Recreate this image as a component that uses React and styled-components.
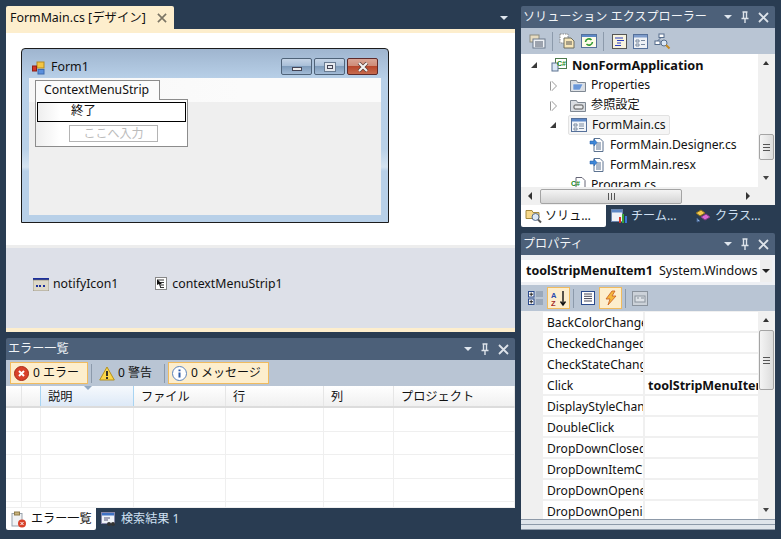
import React from "react";
import styled, { createGlobalStyle } from "styled-components";

const Global = createGlobalStyle`
  html, body { margin: 0; padding: 0; background: #293c52; }
  * { box-sizing: border-box; }
  #root { width: 781px; height: 539px; overflow: hidden; }
`;

const Page = styled.div`
  width: 781px; height: 539px; background: #293c52; padding: 6px 6px 9px;
  display: flex; gap: 6px; color: #111;
  font: 12.2px/16px "Noto Sans", "Noto Sans CJK JP", sans-serif;
`;
const LeftCol = styled.div`width: 509px; display: flex; flex-direction: column; gap: 6px;`;
const RightCol = styled.div`width: 254px; display: flex; flex-direction: column; gap: 6px;`;

/* document well */
const Editor = styled.section`height: 326px; display: flex; flex-direction: column;`;
const TabRow = styled.div`height: 23px; display: flex; justify-content: space-between;`;
const DocTab = styled.div`
  width: 168px; background: #fdeecd; border-radius: 2px 2px 0 0; display: flex; align-items: center;
  justify-content: space-between; padding: 0 7px 0 4px; font-size: 12.4px; white-space: nowrap;
`;
const WellMenu = styled.div`padding: 10px 7px 0 0;`;
const Caret = styled.div`
  width: 0; height: 0; border-left: 4px solid transparent; border-right: 4px solid transparent;
  border-top: 4px solid ${p => p.$c || "#dfe6ee"};
`;
const YellowBar = styled.div`height: ${p => p.$h}px; background: #fdeecd; flex: none;`;
const Designer = styled.div`flex: 1; background: #fff; padding: 15px 0 0 15px; min-height: 0;`;
const GreyLine = styled.div`height: 3px; background: #ededed;`;
const Tray = styled.div`height: 80px; background: #dde0e8; padding: 27px 0 0 27px; display: flex; gap: 37px;`;
const TrayItem = styled.div`display: flex; align-items: center; gap: ${p => p.$gap}px; height: 17px; white-space: nowrap; font-size: 12.3px;`;

/* form */
const FormWindow = styled.div`
  position: relative; width: 368px; height: 175px; border: 1px solid #1c1c1c; border-radius: 4px 4px 0 0;
  background: linear-gradient(#9fb5cf 0, #b8d0e8 30px, #b9d1e8 100px, #d5e3f0 118px, #b8d0e8 122px);
  padding: 0 7px 7px; display: flex; flex-direction: column;
`;
const FormTitle = styled.div`height: 29px; display: flex; align-items: flex-end; padding: 0 3px 3px 3px;`;
const FormName = styled.span`margin-left: 6px; flex: 1; font-size: 12.4px; line-height: 17px; height: 17px;`;
const WinBtns = styled.div`display: flex; gap: 2px;`;
const WinBtn = styled.div`
  width: 31px; height: 17px; border: 1px solid ${p => p.$close ? "#5e2a2a" : "#4f6379"}; border-radius: 2px;
  display: flex; align-items: center; justify-content: center;
  background: ${p => p.$close
    ? "linear-gradient(#d9a596 0, #cf8c78 45%, #b8472c 50%, #c66b4e 100%)"
    : "linear-gradient(#c5d4e6 0, #a9bfd8 45%, #7f9cbb 50%, #a3bbd6 100%)"};
`;
const MinGlyph = styled.div`width: 10px; height: 4px; background: #ececec; border: 1px solid #445; margin-top: 4px;`;
const MaxGlyph = styled.div`width: 10px; height: 8px; background: #e4e8ee; border: 2px solid #e4e8ee; box-shadow: inset 0 0 0 1px #445; outline: 1px solid #6a7c92;`;
const Client = styled.div`flex: 1; background: #efefef; display: flex; flex-direction: column;`;
const MenuBand = styled.div`height: 24px; background: linear-gradient(90deg,#f7f7f7,#fbfbfb 60%,#fbfbfb);`;
const MenuOverlay = styled.div`position: absolute; left: 13px; top: 31px; width: 153px;`;
const MenuTab = styled.div`
  position: relative; width: 125px; height: 20px; border: 1px solid #8c8c8c; border-bottom: 0; background: #fbfbfb;
  padding: 1px 0 0 8px; font-size: 12.3px; z-index: 1; white-space: nowrap;
`;
const MenuBox = styled.div`
  height: 48px; margin-top: -1px; border: 1px solid #8c8c8c; background: #fdfdfd; padding: 2px 1px 0; position: relative;
`;
const SelectedItem = styled.div`
  height: 20px; border: 1px solid #000; padding: 0 0 0 33px; line-height: 16px;
  background: linear-gradient(90deg,#eee,#fff 22px,#fff 22px);
  font-size: 12.5px;
`;
const TypeRow = styled.div`
  height: 24px; padding: 3px 0 0 33px;
  background: linear-gradient(90deg,#eee,#fff 24px,#fff 24px);
  margin: 0 -1px;
`;
const TypeHere = styled.div`
  width: 89px; height: 17px; border: 1px solid #b4b4b4; background: #fff; color: #bcbcbc;
  text-align: center; line-height: 15px; font-size: 12px;
`;

/* tool windows */
const Pane = styled.section`display: flex; flex-direction: column; height: ${p => p.$h}px; flex: none;`;
const PaneHead = styled.header`
  height: 22px; flex: none; background: #4c6079; color: #f1f4f7; border-radius: 2px 2px 0 0;
  display: flex; align-items: center; justify-content: space-between; padding: 0 6px 0 2px; font-size: 12.1px;
  white-space: nowrap;
`;
const HeadBtns = styled.div`display: flex; align-items: center; gap: 8px; color: #dde3ea;`;
const Bar = styled.div`
  height: 26px; flex: none; background: #b9c5d4; display: flex; align-items: center; padding: 0 ${p => p.$px}px; gap: ${p => p.$gap}px;
`;
const Sep = styled.div`width: 1px; height: 19px; background: #8c9aab; margin-right: ${p => p.$mr ?? 0}px;`;
const ToolBtn = styled.div`
  display: flex; align-items: center; justify-content: ${p => p.$center ? "center" : "flex-start"}; gap: ${p => p.$gap ?? 4}px; height: 22px; width: ${p => p.$w}px;
  padding: 0 ${p => p.$center ? 0 : 3}px; white-space: nowrap; font-size: 12px;
  border: 1px solid ${p => p.$on ? "#f0bb5f" : "transparent"};
  background: ${p => p.$on ? "#fdeecd" : "transparent"};
`;

/* error table */
const Table = styled.div`flex: 1; background: #fff; display: flex; flex-direction: column; min-height: 0;`;
const HeadRow = styled.div`
  display: grid; grid-template-columns: 16px 19px 93px 92px 98px 70px 1fr; height: 22px; flex: none;
  border-bottom: 2px solid #dcdcdc;
  background: linear-gradient(#fff, #f0f0f0);
`;
const HeadCell = styled.div`
  position: relative; padding: 3px 0 0 7px; font-size: 12.2px; border-right: 1px solid #e6e6e6;
  ${p => p.$active && `
    background: linear-gradient(#f6f9fd, #dde9f7);
    border-left: 1px solid #a8d4f2; border-right: 1px solid #a8d4f2; margin-left: -1px;
  `}
`;
const SortMark = styled.div`
  position: absolute; left: 43px; top: 0; width: 0; height: 0;
  border-left: 4px solid transparent; border-right: 4px solid transparent; border-top: 4px solid #93a9c2;
`;
const BodyRow = styled.div`
  display: grid; grid-template-columns: 16px 19px 93px 92px 98px 70px 1fr; height: ${p => p.$h}px; flex: none;
  border-bottom: 1px solid #efefef;
`;
const BodyCell = styled.div`border-right: 1px solid #efefef;`;

const BottomTabs = styled.div`height: 22px; flex: none; display: flex; align-items: flex-start;`;
const BottomTab = styled.div`
  height: 22px; width: ${p => p.$w}px; display: flex; align-items: center; gap: ${p => p.$gap ?? 3}px; padding-left: ${p => p.$pl ?? 4}px; white-space: nowrap; font-size: 12.1px;
  color: ${p => p.$on ? "#111" : "#cfe0f3"}; background: ${p => p.$on ? "#fff" : "transparent"};
  border-radius: 0 0 2px 2px;
`;

/* solution explorer */
const Scrolled = styled.div`flex: 1; display: flex; min-height: 0; background: #fff;`;
const TreeClip = styled.div`flex: 1; overflow: hidden; min-width: 0; padding-top: 1px;`;
const TreeRow = styled.div`
  height: ${p => p.$b ? 19 : 20}px; margin-bottom: ${p => p.$b ? 1 : 0}px; display: flex; align-items: center; padding-left: ${p => p.$x}px; position: relative; white-space: nowrap;
  font-weight: ${p => p.$b ? 700 : 400}; font-size: ${p => p.$b ? 12.7 : 12.2}px;
`;
const Expander = styled.div`
  position: absolute; left: ${p => p.$x}px; top: 6px; width: 0; height: 0;
  ${p => p.$open
    ? `border-left: 6px solid transparent; border-bottom: 6px solid #3a3a3a; margin-top:1px;`
    : `border-left: 5px solid #fff; border-top: 5px solid transparent; border-bottom: 5px solid transparent; filter: drop-shadow(1px 0 0 #999) drop-shadow(-1px 0 0 #999);`}
`;
const Sel = styled.span`
  display: flex; align-items: center; height: 20px; padding: 0 3px 0 2px; margin-left: -2px;
  border: 1px solid #e2e2e2; border-radius: 2px; background: #f5f5f5;
`;
const RowLabel = styled.span`margin-left: 5px;`;
const VScroll = styled.div`
  width: 17px; flex: none; background: #f0f0f0; display: flex; flex-direction: column; align-items: center; position: relative;
  padding: ${p => p.$pt}px 0 0;
`;
const Thumb = styled.div`
  width: 15px; height: ${p => p.$h}px; border: 1px solid #a4a4a4; border-radius: 2px;
  background: linear-gradient(90deg,#f4f4f4,#dcdcdc); display: flex; align-items: center; justify-content: center;
`;
const Grip = styled.div`width: 7px; height: 7px; background: repeating-linear-gradient(#555 0 1px, transparent 1px 3px);`;
const HGrip = styled.div`width: 7px; height: 7px; background: repeating-linear-gradient(90deg,#555 0 1px, transparent 1px 3px);`;
const ArrowUp = styled.div`
  position: absolute; top: 7px; left: 5px; width: 0; height: 0; border-left: 3.5px solid transparent; border-right: 3.5px solid transparent; border-bottom: 4px solid #333;
`;
const ArrowDown = styled.div`
  position: absolute; bottom: 7px; left: 5px; width: 0; height: 0; border-left: 3.5px solid transparent; border-right: 3.5px solid transparent; border-top: 4px solid #444;
`;
const HScroll = styled.div`
  height: 18px; flex: none; display: flex; background: #f0f0f0; align-items: center; padding-left: 19px; position: relative;
`;
const HThumb = styled.div`
  width: 142px; height: 15px; border: 1px solid #a4a4a4; border-radius: 2px; background: linear-gradient(#f4f4f4,#d4d4d4);
  display: flex; align-items: center; justify-content: center;
`;
const ArrowLeft = styled.div`position: absolute; left: 7px; top: 5px; width: 0; height: 0; border-top: 4px solid transparent; border-bottom: 4px solid transparent; border-right: 4px solid #333;`;
const ArrowRight = styled.div`position: absolute; right: 25px; top: 5px; width: 0; height: 0; border-top: 4px solid transparent; border-bottom: 4px solid transparent; border-left: 4px solid #333;`;
const Corner = styled.div`width: 17px; height: 18px; background: #f0f0f0; position: absolute; right: 0; top: 0;`;

/* properties */
const Combo = styled.div`
  height: 30px; flex: none; background: #eef0f4; padding: 5px 3px 3px 0; display: flex;
`;
const ComboField = styled.div`
  flex: 1; background: #fff; display: flex; align-items: center; padding-left: 5px; overflow: hidden; white-space: nowrap; font-size: 12.5px;
`;
const ComboName = styled.b`margin-right: 6px;`;
const ComboBtn = styled.div`width: 12px; background: #eee; display: flex; align-items: center; justify-content: center;`;
const GridWrap = styled.div`flex: 1; display: flex; min-height: 0; background: #f0f0f0; overflow: hidden;`;
const Gutter = styled.div`width: 22px; flex: none;`;
const GridRows = styled.div`flex: 1; min-width: 0; overflow: hidden; padding-top: 1px;`;
const PropRow = styled.div`
  height: 21px; display: grid; grid-template-columns: 102px 1fr; background: #fff; border-bottom: 2px solid #f0f0f0;
`;
const PropName = styled.div`
  padding: 1px 0 0 4px; overflow: hidden; white-space: nowrap; border-right: 2px solid #f0f0f0; line-height: 19px; font-size: 12.1px;
`;
const PropValue = styled.div`padding: 1px 0 0 3px; overflow: hidden; white-space: nowrap; font-weight: 700; line-height: 19px; font-size: 12.5px;`;
const GridFoot = styled.div`
  height: 11px; flex: none; border-top: 1px solid #8d99a8; border-bottom: 1px solid #8d99a8;
  background: linear-gradient(#dfe4ea 0 4px, #8d99a8 4px 5px, #dfe4ea 5px);
`;
const Ico = styled.svg`display: block; flex: none;`;

const Pin = () => (
  <Ico width="10" height="13" viewBox="0 0 10 13"><path d="M2.5 1h5M3.5 1v6M6.5 1v6M1.5 7.5h7M5 8v4" stroke="#dde3ea" strokeWidth="1.4" fill="none" /></Ico>
);
const Cross = ({ c = "#dde3ea", s = 11 }) => (
  <Ico width={s} height={s} viewBox="0 0 11 11"><path d="M1 1l9 9M10 1l-9 9" stroke={c} strokeWidth="1.8" /></Ico>
);
const CloseX = () => (
  <Ico width="14" height="10" viewBox="0 0 14 10">
    <path d="M3 1l8 8M11 1l-8 8" stroke="#5a3a34" strokeWidth="3.6" />
    <path d="M3 1l8 8M11 1l-8 8" stroke="#f2f2f2" strokeWidth="2.2" />
  </Ico>
);
const Head = ({ children }) => (
  <PaneHead>
    <span>{children}</span>
    <HeadBtns><Caret /><Pin /><Cross /></HeadBtns>
  </PaneHead>
);
const FormIcon = () => (
  <Ico width="13" height="14" viewBox="0 0 13 14">
    <rect x="5" y="1" width="7" height="6" fill="#f4c542" stroke="#b58a1e" />
    <rect x="6" y="8.5" width="6" height="4.5" fill="#5a8fdc" stroke="#3d6bb0" />
    <rect x="0.5" y="5" width="4" height="5" fill="#d2362a" stroke="#902015" />
  </Ico>
);
const TrayNotify = () => (
  <Ico width="16" height="14" viewBox="0 0 16 14">
    <rect x="0" y="1" width="16" height="2" fill="#1b2f9b" />
    <rect x="0" y="3" width="16" height="11" fill="#ddd8c8" stroke="#7a7666" strokeWidth=".6" />
    <path d="M3 8h2v2H3zM6 8h2v2H6zM10 8h2v2h-2z" fill="#1b2f9b" />
  </Ico>
);
const TrayMenu = () => (
  <Ico width="12" height="13" viewBox="0 0 12 13">
    <rect x=".5" y=".5" width="11" height="12" fill="#fff" stroke="#888" />
    <path d="M3 3h6M5 5.5h4M5 8h4M5 10.5h4" stroke="#333" />
    <path d="M2 2l5 5-2 0 1 3-1 0-1-3-2 1z" fill="#111" />
  </Ico>
);
const Doc = ({ sheet }) => (
  <Ico width="16" height="16" viewBox="0 0 16 16">
    <path d="M5 1.5h6l3 3v10H5z" fill="#fff" stroke="#5c7391" />
    <path d="M7 6h5M7 8h5M7 10h5M7 12h5" stroke="#5c7391" />
    {sheet && <path d="M1 4h4V2l3 3.5L5 9V7H1z" fill="#3c86d8" stroke="#1d5aa6" strokeWidth=".5" />}
  </Ico>
);
const CsProject = () => (
  <Ico width="16" height="16" viewBox="0 0 16 16">
    <rect x="4.5" y="1.5" width="11" height="10" fill="#fff" stroke="#4d7a4d" />
    <rect x="1" y="6" width="6" height="8" fill="#dbe7f5" stroke="#5c7391" />
    <text x="6" y="9" fontSize="7" fontWeight="700" fill="#168a16" fontFamily="Liberation Sans">C#</text>
  </Ico>
);
const CsFile = () => (
  <Ico width="16" height="16" viewBox="0 0 16 16">
    <path d="M6 .5h6l3 3v11H6z" fill="#fff" stroke="#667" />
    <text x="1" y="9" fontSize="7" fontWeight="700" fill="#168a16" fontFamily="Liberation Sans">C#</text>
  </Ico>
);
const Folder = ({ kind }) => (
  <Ico width="16" height="14" viewBox="0 0 16 14">
    <path d="M.5 2.5h6l1 2h8v9H.5z" fill="#d9dde2" stroke="#7f8893" />
    {kind === "prop" && <path d="M3 6h10l-3 6H3z" fill="#6a97d8" stroke="#fff" strokeWidth=".5" />}
    {kind === "ref" && <rect x="4" y="7" width="9" height="4" rx="1" fill="#e8eaec" stroke="#555" />}
  </Ico>
);
const FormFile = () => (
  <Ico width="16" height="14" viewBox="0 0 16 14">
    <rect x=".5" y=".5" width="15" height="13" fill="#f2f5f9" stroke="#55709a" />
    <rect x="1" y="1" width="14" height="2.5" fill="#5d88c7" />
    <path d="M3 6h3v2H3zM3 10h3v2H3zM8 6h5M8 8h5M8 10.5h5" stroke="#7a8ba1" fill="none" />
  </Ico>
);
const ToolDocs = () => (
  <Ico width="17" height="16" viewBox="0 0 17 16">
    <rect x="1" y="2" width="9" height="7" fill="#e8dcc0" stroke="#8c8c80" />
    <rect x="4" y="6" width="12" height="9" fill="#eef1f5" stroke="#6d7a8c" />
    <path d="M6 9h8M6 11h8M6 13h8" stroke="#4a5566" />
  </Ico>
);
const ToolShowAll = () => (
  <Ico width="16" height="16" viewBox="0 0 16 16">
    <rect x="1" y="1" width="8" height="9" fill="#fff" stroke="#888" strokeDasharray="1.5 1" />
    <path d="M5 5h7l3 3v7H5z" fill="#f7e6b8" stroke="#6d6d5e" />
    <path d="M7 9h6M7 11h6" stroke="#555" />
  </Ico>
);
const ToolRefresh = () => (
  <Ico width="16" height="16" viewBox="0 0 16 16">
    <rect x=".5" y="1.5" width="15" height="13" fill="#fdfbe8" stroke="#55709a" />
    <rect x="1" y="2" width="14" height="2" fill="#5d88c7" />
    <path d="M4.5 9a3.5 3.5 0 0 1 6-2M11.5 9a3.5 3.5 0 0 1-6 2" stroke="#2f9a2f" strokeWidth="1.6" fill="none" />
  </Ico>
);
const ToolCode = () => (
  <Ico width="15" height="15" viewBox="0 0 15 15">
    <rect x=".5" y=".5" width="14" height="14" fill="#f8f3df" stroke="#555" />
    <path d="M3 4h8M5 6.5h7M5 9h4M3 11.5h6" stroke="#2a3fc2" />
  </Ico>
);
const ToolDesign = () => (
  <Ico width="15" height="15" viewBox="0 0 15 15">
    <rect x=".5" y=".5" width="14" height="14" fill="#eef1f5" stroke="#55709a" />
    <rect x="1" y="1" width="13" height="2.5" fill="#7e9ccb" />
    <path d="M3 6h3v2H3zM3 10h3v2H3zM8 6.5h4M8 10.5h4" stroke="#7a8ba1" fill="none" />
  </Ico>
);
const ToolClass = () => (
  <Ico width="17" height="17" viewBox="0 0 17 17">
    <rect x="5" y="1" width="5" height="3.5" fill="#fff" stroke="#566d8c" />
    <rect x="1" y="8" width="5" height="3.5" fill="#fff" stroke="#566d8c" />
    <path d="M7 4.5L3.5 8" stroke="#566d8c" />
    <circle cx="10" cy="10" r="3" fill="#dce8f5" stroke="#566d8c" />
    <path d="M12 12l3.5 3.5" stroke="#c58a20" strokeWidth="2" />
  </Ico>
);
const TabSolution = () => (
  <Ico width="17" height="16" viewBox="0 0 17 16">
    <path d="M1 2.5h6l1 2h6v6H1z" fill="#f7d98a" stroke="#a58a3e" />
    <circle cx="10.5" cy="9" r="3.5" fill="#dce8f5" stroke="#566d8c" />
    <path d="M13 11.5l3 3" stroke="#555" strokeWidth="2" />
  </Ico>
);
const TabTeam = () => (
  <Ico width="17" height="16" viewBox="0 0 17 16">
    <rect x=".5" y="1.5" width="11" height="12" fill="#eef2f8" stroke="#6c86ae" />
    <rect x="1" y="2" width="10" height="2.5" fill="#5d88c7" />
    <rect x="8" y="9" width="2" height="6" fill="#d2362a" />
    <rect x="11" y="6" width="2" height="9" fill="#38a838" />
    <rect x="14" y="8" width="2" height="7" fill="#3c78d8" />
  </Ico>
);
const TabClass = () => (
  <Ico width="17" height="16" viewBox="0 0 17 16">
    <path d="M1 5l5-3 4 3-5 3z" fill="#f3c94f" stroke="#8a7020" />
    <path d="M6 9l5-3 4 3-5 3z" fill="#d76bd4" stroke="#843a82" />
    <path d="M2 10l3 3-3 1z" fill="#8fb4e0" stroke="#44618c" />
  </Ico>
);
const ErrorIcon = ({ s = 15 }) => (
  <Ico width={s} height={s} viewBox="0 0 15 15">
    <circle cx="7.5" cy="7.5" r="7" fill="#d8412a" stroke="#a62c18" />
    <path d="M5 5l5 5M10 5l-5 5" stroke="#fff" strokeWidth="2" />
  </Ico>
);
const WarnIcon = () => (
  <Ico width="16" height="15" viewBox="0 0 16 15">
    <path d="M8 1l7.3 13H.7z" fill="#fbd648" stroke="#b39020" />
    <path d="M8 5v5M8 11v2" stroke="#222" strokeWidth="1.8" />
  </Ico>
);
const InfoIcon = () => (
  <Ico width="15" height="15" viewBox="0 0 15 15">
    <circle cx="7.5" cy="7.5" r="7" fill="#fff" stroke="#5a82bc" />
    <path d="M7.5 6.5v5M7.5 3.5v1.8" stroke="#2f5da8" strokeWidth="2" />
  </Ico>
);
const ClipIcon = () => (
  <Ico width="16" height="17" viewBox="0 0 16 17">
    <rect x="1" y="2.5" width="10" height="12.5" fill="#f0f2f4" stroke="#9aa3ad" />
    <rect x="3.5" y="1" width="5" height="3" fill="#c9b27a" stroke="#8c7a4a" />
    <circle cx="11" cy="12.5" r="4" fill="#d8412a" />
    <path d="M9.5 11l3 3M12.5 11l-3 3" stroke="#fff" />
  </Ico>
);
const FindIcon = () => (
  <Ico width="15" height="15" viewBox="0 0 15 15">
    <rect x=".5" y=".5" width="13" height="11" fill="#eef2f8" stroke="#88a" />
    <rect x="1" y="1" width="12" height="2.5" fill="#3f72c4" />
    <path d="M3 6h6M3 8h4" stroke="#557" />
    <circle cx="8" cy="12" r="2" fill="#333" /><circle cx="12" cy="12" r="2" fill="#333" />
  </Ico>
);
const CategorizedIcon = () => (
  <Ico width="16" height="16" viewBox="0 0 16 16">
    <rect x=".5" y="1.5" width="5.5" height="5.5" fill="#fff" stroke="#2a4a8c" />
    <path d="M1.5 4.2h3.5M3.2 2.5v3.5" stroke="#222" />
    <rect x=".5" y="9" width="5.5" height="5.5" fill="#fff" stroke="#2a4a8c" />
    <path d="M1.5 11.7h3.5M3.2 10v3.5" stroke="#222" />
    <path d="M8 2h7M8 4h7M8 6h7M8 10h7M8 12h7M8 14h7" stroke="#7a8ba1" />
  </Ico>
);
const AzIcon = () => (
  <Ico width="16" height="17" viewBox="0 0 16 17">
    <text x="0" y="7.5" fontSize="7.5" fontWeight="700" fill="#2a4ab0" fontFamily="Liberation Sans">A</text>
    <text x="0" y="16" fontSize="7.5" fontWeight="700" fill="#a32a2a" fontFamily="Liberation Sans">Z</text>
    <path d="M12 1v13M9.5 11.5l2.5 3.5 2.5-3.5" stroke="#111" strokeWidth="1.4" fill="none" />
  </Ico>
);
const PagesIcon = () => (
  <Ico width="14" height="14" viewBox="0 0 14 14">
    <rect x=".5" y=".5" width="13" height="13" fill="#fff" stroke="#2a4a8c" />
    <path d="M3 3h8M3 5.3h8M3 7.6h8M3 10h8" stroke="#445" />
  </Ico>
);
const BoltIcon = () => (
  <Ico width="14" height="16" viewBox="0 0 14 16">
    <path d="M8 1L2 9h4l-2 6 8-9H8l3-5z" fill="#f5b73c" stroke="#c85a20" strokeWidth=".8" />
  </Ico>
);
const PropPageIcon = () => (
  <Ico width="16" height="15" viewBox="0 0 16 15">
    <rect x=".5" y=".5" width="15" height="14" fill="#ccd2d9" stroke="#8a939d" />
    <rect x="3" y="5" width="10" height="6" fill="#dde2e7" stroke="#8a939d" />
    <path d="M5 7h2M9 7h3" stroke="#8a939d" />
  </Ico>
);

const propNames = ["BackColorChanged","CheckedChanged","CheckStateChanged","Click","DisplayStyleChanged","DoubleClick","DropDownClosed","DropDownItemClicked","DropDownOpened","DropDownOpening"];

export default function App() {
  return (
    <Page>
      <Global />
      <LeftCol>
        <Editor>
          <TabRow>
            <DocTab>FormMain.cs [デザイン]<Cross c="#7b7565" s={10} /></DocTab>
            <WellMenu><Caret /></WellMenu>
          </TabRow>
          <YellowBar $h={4} />
          <Designer>
            <FormWindow>
              <FormTitle>
                <FormIcon />
                <FormName>Form1</FormName>
                <WinBtns>
                  <WinBtn><MinGlyph /></WinBtn>
                  <WinBtn><MaxGlyph /></WinBtn>
                  <WinBtn $close><CloseX /></WinBtn>
                </WinBtns>
              </FormTitle>
              <Client><MenuBand /></Client>
              <MenuOverlay>
                <MenuTab>ContextMenuStrip</MenuTab>
                <MenuBox>
                  <SelectedItem>終了</SelectedItem>
                  <TypeRow><TypeHere>ここへ入力</TypeHere></TypeRow>
                </MenuBox>
              </MenuOverlay>
            </FormWindow>
          </Designer>
          <GreyLine />
          <Tray>
            <TrayItem $gap={4}><TrayNotify />notifyIcon1</TrayItem>
            <TrayItem $gap={5}><TrayMenu />contextMenuStrip1</TrayItem>
          </Tray>
          <YellowBar $h={4} />
        </Editor>
        <Pane $h={192}>
          <Head>エラー一覧</Head>
          <Bar $px={4} $gap={3}>
            <ToolBtn $on $w={78}><ErrorIcon />0 エラー</ToolBtn>
            <Sep />
            <ToolBtn $w={66} $gap={3}><WarnIcon />0 警告</ToolBtn>
            <Sep />
            <ToolBtn $on $w={101}><InfoIcon />0 メッセージ</ToolBtn>
          </Bar>
          <Table>
            <HeadRow>
              <HeadCell /><HeadCell />
              <HeadCell $active>説明<SortMark /></HeadCell>
              <HeadCell>ファイル</HeadCell>
              <HeadCell>行</HeadCell>
              <HeadCell>列</HeadCell>
              <HeadCell>プロジェクト</HeadCell>
            </HeadRow>
            {[24, 23, 24, 23, 6].map((h, i) => (
              <BodyRow key={i} $h={h}>
                {[0,1,2,3,4,5,6].map(c => <BodyCell key={c} />)}
              </BodyRow>
            ))}
          </Table>
          <BottomTabs>
            <BottomTab $on $w={90} $pl={5} $gap={4}><ClipIcon />エラー一覧</BottomTab>
            <BottomTab $w={100} $pl={5} $gap={5}><FindIcon />検索結果 1</BottomTab>
          </BottomTabs>
        </Pane>
      </LeftCol>
      <RightCol>
        <Pane $h={221}>
          <Head>ソリューション エクスプローラー</Head>
          <Bar $px={8} $gap={6}>
            <ToolDocs /><Sep /><ToolShowAll /><ToolRefresh /><Sep $mr={2} /><ToolCode /><ToolDesign /><ToolClass />
          </Bar>
          <Scrolled>
            <TreeClip>
              <TreeRow $x={30} $b><Expander $open $x={10} /><CsProject /><RowLabel>NonFormApplication</RowLabel></TreeRow>
              <TreeRow $x={49}><Expander $x={30} /><Folder kind="prop" /><RowLabel>Properties</RowLabel></TreeRow>
              <TreeRow $x={49}><Expander $x={30} /><Folder kind="ref" /><RowLabel>参照設定</RowLabel></TreeRow>
              <TreeRow $x={49}><Expander $open $x={29} /><Sel><FormFile /><RowLabel>FormMain.cs</RowLabel></Sel></TreeRow>
              <TreeRow $x={68}><Doc sheet /><RowLabel>FormMain.Designer.cs</RowLabel></TreeRow>
              <TreeRow $x={68}><Doc sheet /><RowLabel>FormMain.resx</RowLabel></TreeRow>
              <TreeRow $x={49}><CsFile /><RowLabel>Program.cs</RowLabel></TreeRow>
            </TreeClip>
            <VScroll $pt={80}>
              <ArrowUp />
              <Thumb $h={26}><Grip /></Thumb>
              <ArrowDown />
            </VScroll>
          </Scrolled>
          <HScroll>
            <ArrowLeft />
            <HThumb><HGrip /></HThumb>
            <ArrowRight />
            <Corner />
          </HScroll>
          <BottomTabs>
            <BottomTab $on $w={85}><TabSolution />ソリュ…</BottomTab>
            <BottomTab $w={84} $pl={5}><TabTeam />チーム…</BottomTab>
            <BottomTab $w={85} $pl={5}><TabClass />クラス…</BottomTab>
          </BottomTabs>
        </Pane>
        <Pane $h={297}>
          <Head>プロパティ</Head>
          <Combo>
            <ComboField><ComboName>toolStripMenuItem1</ComboName>System.Windows</ComboField>
            <ComboBtn><Caret $c="#222" /></ComboBtn>
          </Combo>
          <Bar $px={7} $gap={3}>
            <CategorizedIcon />
            <ToolBtn $on $center $w={23}><AzIcon /></ToolBtn>
            <Sep $mr={2} />
            <ToolBtn $center $w={17}><PagesIcon /></ToolBtn>
            <ToolBtn $on $center $w={23}><BoltIcon /></ToolBtn>
            <Sep />
            <ToolBtn $center $w={21}><PropPageIcon /></ToolBtn>
          </Bar>
          <GridWrap>
            <Gutter />
            <GridRows>
              {propNames.map(n => (
                <PropRow key={n}>
                  <PropName>{n}</PropName>
                  <PropValue>{n === "Click" ? "toolStripMenuItem1_Click" : ""}</PropValue>
                </PropRow>
              ))}
            </GridRows>
            <VScroll $pt={19}>
              <ArrowUp />
              <Thumb $h={60}><Grip /></Thumb>
              <ArrowDown />
            </VScroll>
          </GridWrap>
          <GridFoot />
        </Pane>
      </RightCol>
    </Page>
  );
}
